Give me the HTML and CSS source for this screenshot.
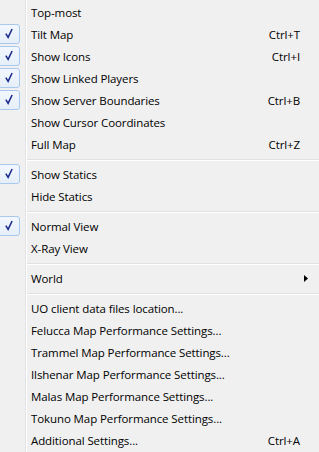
FILE: index.html
```html
<!DOCTYPE html>
<html>
<head>
<meta charset="utf-8">
<link rel="stylesheet" href="styles.css">
</head>
<body>
<div class="menu">
  <div class="item"><span class="gut"></span><span class="label">Top-most</span></div>
  <div class="item"><span class="gut"><span class="check"><svg width="22" height="20" viewBox="0 0 22 20"><path d="M8.2 9.6 L10.6 13.6 L14.8 4.8" fill="none" stroke="#1a2a8c" stroke-width="1.6"/></svg></span></span><span class="label">Tilt Map</span><span class="key">Ctrl+T</span></div>
  <div class="item"><span class="gut"><span class="check"><svg width="22" height="20" viewBox="0 0 22 20"><path d="M8.2 9.6 L10.6 13.6 L14.8 4.8" fill="none" stroke="#1a2a8c" stroke-width="1.6"/></svg></span></span><span class="label">Show Icons</span><span class="key">Ctrl+I</span></div>
  <div class="item"><span class="gut"><span class="check"><svg width="22" height="20" viewBox="0 0 22 20"><path d="M8.2 9.6 L10.6 13.6 L14.8 4.8" fill="none" stroke="#1a2a8c" stroke-width="1.6"/></svg></span></span><span class="label">Show Linked Players</span></div>
  <div class="item"><span class="gut"><span class="check"><svg width="22" height="20" viewBox="0 0 22 20"><path d="M8.2 9.6 L10.6 13.6 L14.8 4.8" fill="none" stroke="#1a2a8c" stroke-width="1.6"/></svg></span></span><span class="label">Show Server Boundaries</span><span class="key">Ctrl+B</span></div>
  <div class="item"><span class="gut"></span><span class="label">Show Cursor Coordinates</span></div>
  <div class="item"><span class="gut"></span><span class="label">Full Map</span><span class="key">Ctrl+Z</span></div>
  <div class="sep"></div>
  <div class="item"><span class="gut"><span class="check"><svg width="22" height="20" viewBox="0 0 22 20"><path d="M8.2 9.6 L10.6 13.6 L14.8 4.8" fill="none" stroke="#1a2a8c" stroke-width="1.6"/></svg></span></span><span class="label">Show Statics</span></div>
  <div class="item"><span class="gut"></span><span class="label">Hide Statics</span></div>
  <div class="sep"></div>
  <div class="item"><span class="gut"><span class="check"><svg width="22" height="20" viewBox="0 0 22 20"><path d="M8.2 9.6 L10.6 13.6 L14.8 4.8" fill="none" stroke="#1a2a8c" stroke-width="1.6"/></svg></span></span><span class="label">Normal View</span></div>
  <div class="item"><span class="gut"></span><span class="label">X-Ray View</span></div>
  <div class="sep"></div>
  <div class="item"><span class="gut"></span><span class="label">World</span><span class="arrow"><svg width="4" height="7" viewBox="0 0 4 7"><path d="M0 0 L4 3.5 L0 7 Z" fill="#000"/></svg></span></div>
  <div class="sep"></div>
  <div class="item"><span class="gut"></span><span class="label">UO client data files location...</span></div>
  <div class="item"><span class="gut"></span><span class="label">Felucca Map Performance Settings...</span></div>
  <div class="item"><span class="gut"></span><span class="label">Trammel Map Performance Settings...</span></div>
  <div class="item"><span class="gut"></span><span class="label">Ilshenar Map Performance Settings...</span></div>
  <div class="item"><span class="gut"></span><span class="label">Malas Map Performance Settings...</span></div>
  <div class="item"><span class="gut"></span><span class="label">Tokuno Map Performance Settings...</span></div>
  <div class="item"><span class="gut"></span><span class="label">Additional Settings...</span><span class="key">Ctrl+A</span></div>
</div>
</body>
</html>
```
FILE: styles.css
```css
html, body {
  margin: 0;
  padding: 0;
  background: #f0f0f0;
}
.menu {
  width: 319px;
  height: 452px;
  box-sizing: border-box;
  padding-top: 1px;
  background: linear-gradient(to right, transparent 25px, #e2e3e3 25px, #e2e3e3 26px, #ffffff 26px, #ffffff 27px, transparent 27px) , #f0f0f0;
  font-family: "Open Sans", "Noto Sans", sans-serif;
  font-size: 11.5px;
  color: #000;
  display: flex;
  flex-direction: column;
}
.item {
  height: 22px;
  display: flex;
  align-items: center;
}
.gut {
  width: 27px;
  height: 22px;
  flex: none;
  display: flex;
  align-items: center;
}
.check {
  width: 22px;
  height: 20px;
  margin-left: -2px;
  box-sizing: border-box;
  border: 1px solid #a9c8ee;
  border-radius: 3px;
  background: linear-gradient(#f2f7fd, #e6eff9);
  display: flex;
}
.check svg {
  margin: -1px 0 0 -1px;
}
.label {
  flex: 1;
  padding-left: 4px;
  white-space: nowrap;
  letter-spacing: -0.1px;
}
.key {
  padding-right: 19px;
  white-space: nowrap;
  letter-spacing: -0.1px;
}
.arrow {
  padding-right: 11px;
  display: flex;
  align-items: center;
}
.sep {
  height: 8px;
  flex: none;
  margin-left: 27px;
  background: linear-gradient(to bottom, transparent 4px, #e0e0e0 4px, #e0e0e0 5px, #ffffff 5px, #ffffff 6px, transparent 6px);
}
```
